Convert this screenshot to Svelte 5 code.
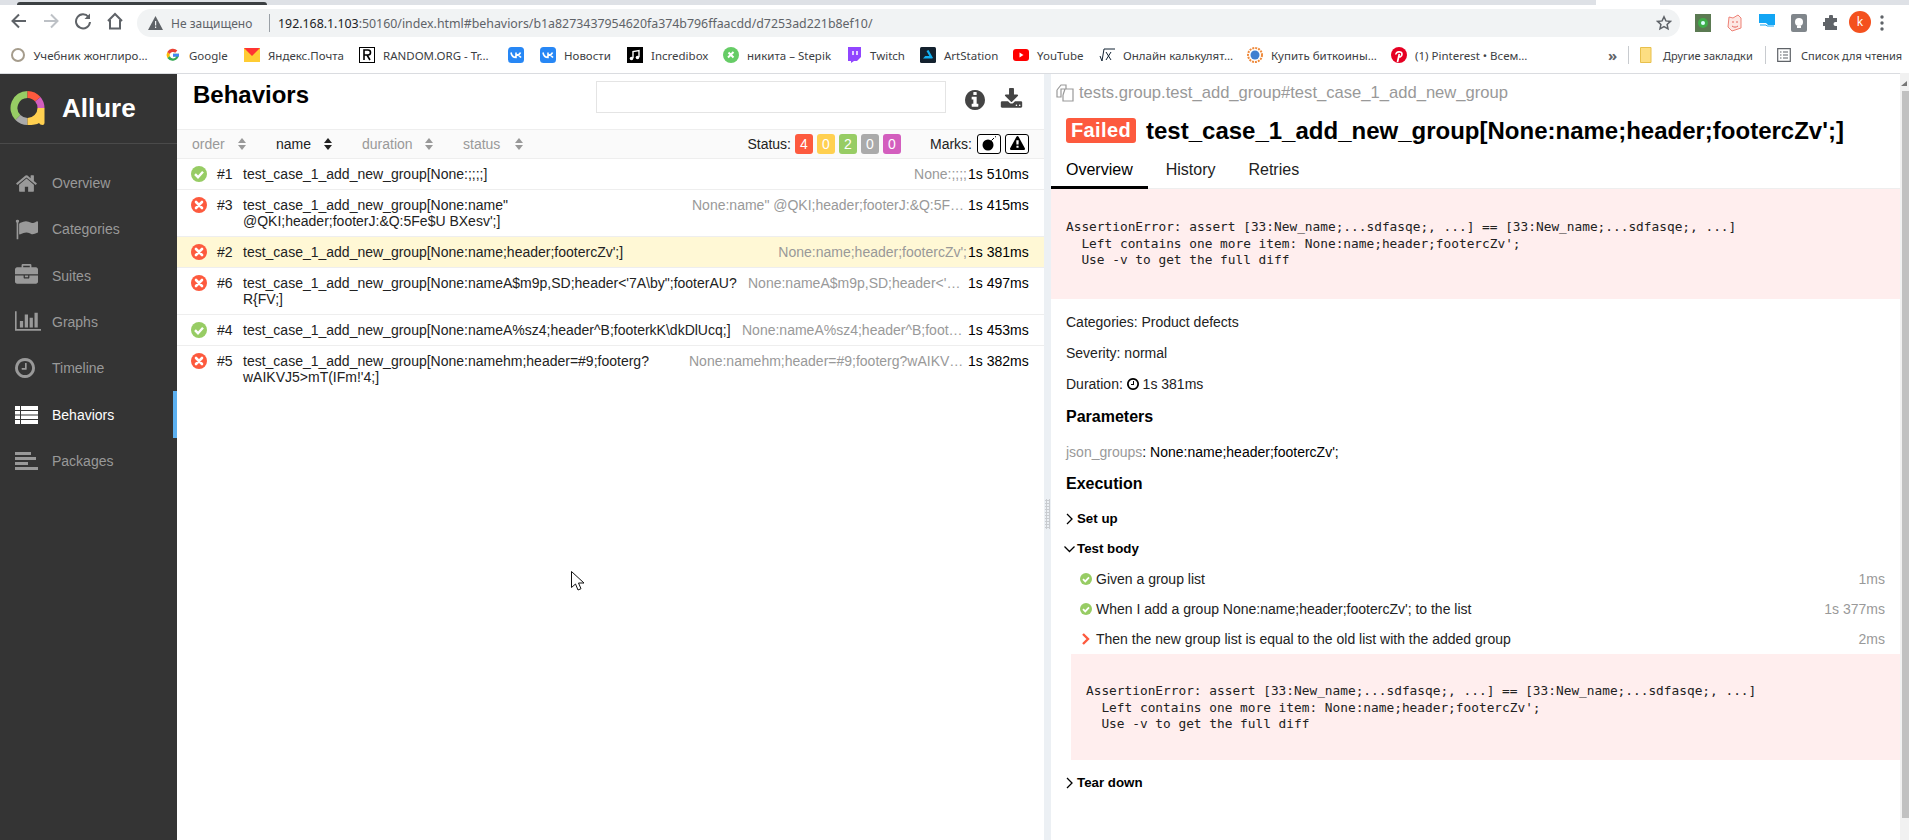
<script>
	const bookmarks = [
		{ kind: 'globe', label: 'Учебник жонглиро…', width: 155.5 },
		{ kind: 'google', label: 'Google', width: 79 },
		{ kind: 'yandex', label: 'Яндекс.Почта', width: 115 },
		{ kind: 'random', label: 'RANDOM.ORG - Tr…', width: 149 },
		{ kind: 'vk', label: '', width: 32 },
		{ kind: 'vk', label: 'Новости', width: 87 },
		{ kind: 'incredibox', label: 'Incredibox', width: 96 },
		{ kind: 'stepik', label: 'никита – Stepik', width: 123 },
		{ kind: 'twitch', label: 'Twitch', width: 74 },
		{ kind: 'artstation', label: 'ArtStation', width: 93 },
		{ kind: 'youtube', label: 'YouTube', width: 86 },
		{ kind: 'calc', label: 'Онлайн калькулят…', width: 148 },
		{ kind: 'bitcoin', label: 'Купить биткоины…', width: 144 },
		{ kind: 'pinterest', label: '(1) Pinterest • Всем…', width: 140 }
	];

	const navItems = [
		{ id: 'overview', name: 'Overview' },
		{ id: 'categories', name: 'Categories' },
		{ id: 'suites', name: 'Suites' },
		{ id: 'graphs', name: 'Graphs' },
		{ id: 'timeline', name: 'Timeline' },
		{ id: 'behaviors', name: 'Behaviors' },
		{ id: 'packages', name: 'Packages' }
	];

	const columns = [
		{ name: 'order', width: 84 },
		{ name: 'name', width: 86 },
		{ name: 'duration', width: 101 },
		{ name: 'status', width: 90 }
	];

	const statuses = [
		{ n: 4, color: '#fd5a3e' },
		{ n: 0, color: '#ffd050' },
		{ n: 2, color: '#97cc64' },
		{ n: 0, color: '#aaa' },
		{ n: 0, color: '#d35ebe' }
	];

	const rows = [
		{ ok: true, order: 1, params: 'None:;;;;', shown: 'None:;;;;', time: '1s 510ms' },
		{ ok: false, order: 3, params: 'None:name" @QKI;header;footerJ:&Q:5Fe$U BXesv\';', shown: 'None:name" @QKI;header;footerJ:&Q:5F…', time: '1s 415ms', w: 275 },
		{ ok: false, order: 2, params: "None:name;header;footercZv';", shown: "None:name;header;footercZv';", time: '1s 381ms', active: true },
		{ ok: false, order: 6, params: 'None:nameA$m9p,SD;header<\'7A\\by";footerAU?R{FV;', shown: "None:nameA$m9p,SD;header<'…", time: '1s 497ms', w: 219 },
		{ ok: true, order: 4, params: 'None:nameA%sz4;header^B;footerkK\\dkDlUcq;', shown: 'None:nameA%sz4;header^B;foot…', time: '1s 453ms', w: 225 },
		{ ok: false, order: 5, params: "None:namehm;header=#9;footerg?wAIKVJ5>mT(IFm!'4;", shown: 'None:namehm;header=#9;footerg?wAIKV…', time: '1s 382ms', w: 278 }
	];

	const errorText = `AssertionError: assert [33:New_name;...sdfasqe;, ...] == [33:New_name;...sdfasqe;, ...]
  Left contains one more item: None:name;header;footercZv';
  Use -v to get the full diff`;
</script>

{#snippet statusIcon(ok, size)}
	<svg class="status-icon" width={size} height={size} viewBox="0 0 16 16">
		{#if ok}
			<circle cx="8" cy="8" r="8" fill="#97cc64" />
			<path d="M4 8.2l3 3 5-5.4" fill="none" stroke="#fff" stroke-width="2.4" />
		{:else}
			<circle cx="8" cy="8" r="8" fill="#fd5a3e" />
			<path d="M5 5l6 6M11 5l-6 6" fill="none" stroke="#fff" stroke-width="2.6" stroke-linecap="round" />
		{/if}
	</svg>
{/snippet}

{#snippet navIcon(id)}
	{#if id === 'overview'}
		<svg width="23" height="23" viewBox="0 0 1792 1792"><path fill="currentColor" d="M1472 992v480q0 26-19 45t-45 19h-384v-384h-256v384h-384q-26 0-45-19t-19-45v-480q0-1 .5-3t.5-3l575-474 575 474q1 2 1 6zm223-69l-62 74q-8 9-21 11h-3q-13 0-21-7l-692-577-692 577q-12 8-24 7-13-2-21-11l-62-74q-8-10-7-23.5t11-21.5l719-599q32-26 76-26t76 26l244 204v-195q0-14 9-23t23-9h192q14 0 23 9t9 23v408l219 182q10 8 11 21.5t-7 23.5z" /></svg>
	{:else if id === 'categories'}
		<svg width="23" height="23" viewBox="0 0 1792 1792"><path fill="currentColor" d="M320 256q0 72-64 110v1266q0 13-9.5 22.5t-22.5 9.5h-64q-13 0-22.5-9.5t-9.5-22.5v-1266q-64-38-64-110 0-53 37.5-90.5t90.5-37.5 90.5 37.5 37.5 90.5zm1472 64v763q0 25-12.5 38.5t-39.5 27.5q-215 116-369 116-61 0-123.5-22t-108.5-48-115.5-48-142.5-22q-192 0-464 146-17 9-33 9-26 0-45-19t-19-45v-742q0-32 31-55 21-14 79-43 236-120 421-120 107 0 200 29t219 88q38 19 88 19 54 0 117.5-21t110-47 88-47 54.5-21q26 0 45 19t19 45z" /></svg>
	{:else if id === 'suites'}
		<svg width="23" height="23" viewBox="0 0 1792 1792"><path fill="currentColor" d="M640 256h512v-128h-512v128zm1152 640v480q0 66-47 113t-113 47h-1472q-66 0-113-47t-47-113v-480h672v160q0 26 19 45t45 19h320q26 0 45-19t19-45v-160h672zm-768 0v128h-256v-128h256zm768-480v384h-1792v-384q0-66 47-113t113-47h352v-160q0-40 28-68t68-28h576q40 0 68 28t28 68v160h352q66 0 113 47t47 113z" /></svg>
	{:else if id === 'graphs'}
		<svg width="26" height="23" viewBox="0 128 2048 1792"><path fill="currentColor" d="M640 896v512h-256v-512h256zm384-512v1024h-256v-1024h256zm1024 1152v128h-2048v-1536h128v1408h1920zm-640-896v768h-256v-768h256zm384-384v1152h-256v-1152h256z" /></svg>
	{:else if id === 'timeline'}
		<svg width="20" height="20" viewBox="128 128 1536 1536"><path fill="currentColor" d="M1024 544v448q0 14-9 23t-23 9h-320q-14 0-23-9t-9-23v-64q0-14 9-23t23-9h224v-352q0-14 9-23t23-9h64q14 0 23 9t9 23zm416 352q0-148-73-273t-198-198-273-73-273 73-198 198-73 273 73 273 198 198 273 73 273-73 198-198 73-273zm224 0q0 209-103 385.500t-279.500 279.500-385.500 103-385.500-103-279.500-279.500-103-385.500 103-385.500 279.500-279.500 385.500-103 385.500 103 279.500 279.500 103 385.500z" /></svg>
	{:else if id === 'behaviors'}
		<svg width="23" height="20" viewBox="0 0 23 20"><path fill="currentColor" d="M0 1h23v4H0zM0 6h23v3.5H0zM0 10.500h23V14H0zM0 15h23v4H0z" /><path fill="#343434" d="M5 1h1v18H5z" /></svg>
	{:else}
		<svg width="23" height="20" viewBox="0 0 23 20"><path fill="currentColor" d="M0 1h16v3H0zM0 6h21v3H0zM0 11h13v3H0zM0 16h23v3H0z" /></svg>
	{/if}
{/snippet}

{#snippet bookmarkIcon(kind)}
	<svg class="bm-icon" width="16" height="16" viewBox="0 0 16 16">
		{#if kind === 'globe'}
			<circle cx="8" cy="8" r="6" fill="#fff" stroke="#a59c8c" stroke-width="2" />
		{:else if kind === 'google'}
			<path d="M14 6.800H8v2.800h3.300A3.500 3.500 0 0 1 4.800 9L2.300 11A6.500 6.500 0 0 0 14 8z" fill="#34a853" />
			<path d="M2.300 5A6.500 6.500 0 0 0 2.300 11L4.800 9a3.500 3.500 0 0 1 0-2z" fill="#fbbc05" />
			<path d="M2.300 5l2.500 2a3.500 3.500 0 0 1 5.400-1.300L12.400 3.600A6.500 6.500 0 0 0 2.300 5z" fill="#ea4335" />
			<path d="M14 6.800H8v2.800h6z" fill="#4285f4" />
		{:else if kind === 'yandex'}
			<rect y="1" width="16" height="14" fill="#ffcc33" />
			<path d="M0 1h16L8 9z" fill="#f33" />
		{:else if kind === 'random'}
			<rect x=".5" y=".5" width="15" height="15" fill="#fff" stroke="#000" />
			<path d="M5 13V3h4a2.500 2.500 0 0 1 0 5H5M8 8l3 5" fill="none" stroke="#000" stroke-width="1.600" />
		{:else if kind === 'vk'}
			<rect width="16" height="16" rx="3.500" fill="#2787f5" />
			<path d="M3 5.500c.5 3 2 5 5 5V5.500M12.500 5.500C12 7 10.500 8 8.500 8c2 0 3.500 1 4.500 2.500" fill="none" stroke="#fff" stroke-width="1.600" />
		{:else if kind === 'incredibox'}
			<rect width="16" height="16" fill="#000" />
			<path d="M6 11V4.500l6-1V10" fill="none" stroke="#fff" stroke-width="1.400" />
			<circle cx="4.500" cy="11.500" r="1.800" fill="#fff" />
			<circle cx="10.500" cy="10.500" r="1.800" fill="#fff" />
		{:else if kind === 'stepik'}
			<circle cx="8" cy="8" r="8" fill="#66cc66" />
			<path d="M5 10.500L10.500 5M5.500 5.500l5 5" fill="none" stroke="#fff" stroke-width="2" />
		{:else if kind === 'twitch'}
			<path d="M2 0h13v10l-4 4H8l-3 2v-2H2z" fill="#9146ff" />
			<path d="M7 4v4M11 4v4" stroke="#fff" stroke-width="1.500" />
		{:else if kind === 'artstation'}
			<rect width="16" height="16" rx="1.500" fill="#13212e" />
			<path d="M8.500 3l4.500 8h-2.500L6.500 4zM3 11.500l2.200-2.500h6.300l1 1.800v.7z" fill="#13aff0" />
		{:else if kind === 'youtube'}
			<rect y="2" width="16" height="12" rx="3" fill="#f00" />
			<path d="M6.500 5.500v5l4-2.500z" fill="#fff" />
		{:else if kind === 'calc'}
			<path d="M1 9l2 5 2-12h11M7 5l5 8M12 5l-5 8" fill="none" stroke="#123" stroke-width="1" />
		{:else if kind === 'bitcoin'}
			<circle cx="8" cy="8" r="7" fill="#fff" stroke="#ee8a3c" stroke-width="2" stroke-dasharray="2 1" />
			<circle cx="8" cy="8" r="4.500" fill="#3f7fd0" />
		{:else if kind === 'pinterest'}
			<circle cx="8" cy="8" r="8" fill="#e60023" />
			<path d="M6.500 15l1.800-8M5 7.500C4.500 4.500 11 3.500 11 7c0 3-3 3.500-3.500 2" fill="none" stroke="#fff" stroke-width="1.700" />
		{/if}
	</svg>
{/snippet}

<div class="page">
	<div class="tabstrip">
		<span class="tab-dark"></span>
		<span class="tab-white"></span>
	</div>

	<div class="toolbar">
		<div class="nav-buttons">
			<svg width="32" height="18" viewBox="0 0 32 18"><path d="M23 9H10M16 2.500L9.500 9l6.500 6.500" fill="none" stroke="#5f6368" stroke-width="2" /></svg>
			<svg width="32" height="18" viewBox="0 0 32 18"><path d="M9 9h13M16 2.500L22.500 9 16 15.500" fill="none" stroke="#bdc1c6" stroke-width="2" /></svg>
			<svg width="32" height="18" viewBox="0 0 32 18"><path d="M21.500 5A7 7 0 1 0 23 10" fill="none" stroke="#5f6368" stroke-width="2" /><path d="M23 1.500V7h-5.500z" fill="#5f6368" /></svg>
			<svg width="32" height="18" viewBox="0 0 32 18"><path d="M9 9L16 2l7 7M11 8v8.500h10V8" fill="none" stroke="#5f6368" stroke-width="2" /></svg>
		</div>
		<div class="omnibox">
			<svg class="warn" width="15" height="14" viewBox="0 0 15 14"><path d="M7.500 0L15 14H0z" fill="#5f6368" /><path d="M7 5h1.200v4.500H7zM7 10.500h1.200V12H7z" fill="#f1f3f4" /></svg>
			<span class="insecure">Не защищено</span>
			<span class="omni-sep"></span>
			<span class="url">192.168.1.103<span class="url-rest">:50160/index.html#behaviors/b1a8273437954620fa374b796ffaacdd/d7253ad221b8ef10/</span></span>
			<svg class="star" width="16" height="16" viewBox="0 0 16 16"><path d="M8 1.800l1.900 4.100 4.500.5-3.300 3 .9 4.400L8 11.600l-4 2.200.9-4.400-3.300-3 4.500-.5z" fill="none" stroke="#5f6368" stroke-width="1.500" /></svg>
		</div>
		<div class="extensions">
			<svg width="16" height="18" viewBox="0 0 16 18"><rect width="16" height="18" fill="#5b7a52" /><circle cx="8" cy="9" r="5" fill="#3fae49" /><circle cx="8" cy="9" r="2" fill="#dff" /></svg>
			<svg width="16" height="18" viewBox="0 0 16 18"><path d="M2 3l4 1 5-3 3 3v10l-9 3-4-4z" fill="#fde8e4" stroke="#ee8277" /><path d="M5 8h2M9 8h2M5 12c2 1.500 4 1.500 6 0" fill="none" stroke="#e3625a" /></svg>
			<svg width="16" height="18" viewBox="0 0 16 18"><rect width="16" height="18" fill="#12a5f4" /><path d="M0 9h7l2 2h7v7H0z" fill="#fff" /><path d="M1 11h6l1 1h7" fill="none" stroke="#12a5f4" /></svg>
			<svg width="16" height="18" viewBox="0 0 16 18"><rect width="16" height="18" rx="2" fill="#80868b" /><circle cx="8" cy="8" r="4" fill="#fff" /><rect x="6" y="12" width="4" height="2" fill="#fff" /></svg>
			<svg width="16" height="16" viewBox="0 0 16 16"><path d="M6 1.500a2 2 0 0 1 4 0V3h4v4h-1.500a2 2 0 0 0 0 4H14v4H2v-4h-1.500a2 2 0 0 1 0-4H2V3h4z" fill="#5f6368" /></svg>
		</div>
		<span class="avatar">k</span>
		<svg class="menu-dots" width="4" height="16" viewBox="0 0 4 16"><circle cx="2" cy="2" r="1.700" fill="#5f6368" /><circle cx="2" cy="8" r="1.700" fill="#5f6368" /><circle cx="2" cy="14" r="1.700" fill="#5f6368" /></svg>
	</div>

	<div class="bookmarks">
		{#each bookmarks as b}
			<div class="bookmark" style="width: {b.width}px">
				{@render bookmarkIcon(b.kind)}
				{#if b.label}<span>{b.label}</span>{/if}
			</div>
		{/each}
		<div class="bm-right">
			<span class="more">»</span>
			<span class="bm-sep"></span>
			<svg class="folder" width="12" height="16" viewBox="0 0 12 16"><path d="M.5.500h10.500v15H.5z" fill="#fdd663" fill-opacity=".8" stroke="#e8c04c" /></svg>
			<span class="other">Другие закладки</span>
			<span class="bm-sep"></span>
			<svg class="reading" width="14" height="14" viewBox="0 0 14 14"><path d="M.7.700h12.600v12.600H.7zM3 4h1.500M6 4h5M3 7h1.500M6 7h5M3 10h1.500M6 10h5" fill="none" stroke="#5f6368" stroke-width="1.200" /></svg>
			<span>Список для чтения</span>
		</div>
	</div>

	<div class="app">
		<aside class="sidebar">
			<div class="brand">
				<svg width="36" height="36" viewBox="0 0 36 36">
					<path d="M7.950 26.550A13.500 13.500 0 0 1 17.500 3.500" fill="none" stroke="#97cc64" stroke-width="7" />
					<path d="M17.500 3.500A13.500 13.500 0 0 1 27.800 8.300" fill="none" stroke="#fd5a3e" stroke-width="7" />
					<path d="M27.800 8.300A13.500 13.500 0 0 1 31 17" fill="none" stroke="#d35ebe" stroke-width="7" />
					<path d="M17.500 30.500A13.500 13.500 0 0 1 7.950 26.550" fill="none" stroke="#aaa" stroke-width="7" />
					<path d="M17.500 27A10 10 0 0 0 27.500 17H34.500V32Q34.500 34 32.500 34Q30 34 29 32Q26 34 17.500 34Z" fill="#ffd050" />
				</svg>
				<span class="brand-name">Allure</span>
			</div>
			<nav class="nav">
				{#each navItems as item}
					<div class="nav-item {item.id === 'behaviors' ? 'active' : ''}">
						<span class="nav-icon">{@render navIcon(item.id)}</span>
						<span>{item.name}</span>
					</div>
				{/each}
			</nav>
		</aside>

		<section class="center">
			<div class="center-head">
				<h2>Behaviors</h2>
				<div class="search"></div>
				<svg class="info" width="20" height="20" viewBox="128 128 1536 1536"><path fill="#444" d="M1152 1376v-160q0-14-9-23t-23-9h-96v-512q0-14-9-23t-23-9h-320q-14 0-23 9t-9 23v160q0 14 9 23t23 9h96v320h-96q-14 0-23 9t-9 23v160q0 14 9 23t23 9h448q14 0 23-9t9-23zm-128-896v-160q0-14-9-23t-23-9h-192q-14 0-23 9t-9 23v160q0 14 9 23t23 9h192q14 0 23-9t9-23zm640 416q0 209-103 385.500t-279.500 279.500-385.500 103-385.500-103-279.500-279.500-103-385.500 103-385.500 279.500-279.500 385.500-103 385.500 103 279.500 279.500 103 385.500z" /></svg>
				<svg class="download" width="23" height="23" viewBox="0 0 1792 1792"><path fill="#444" d="M1344 1344q0-26-19-45t-45-19-45 19-19 45 19 45 45 19 45-19 19-45zm256 0q0-26-19-45t-45-19-45 19-19 45 19 45 45 19 45-19 19-45zm128-224v320q0 40-28 68t-68 28h-1472q-40 0-68-28t-28-68v-320q0-40 28-68t68-28h465l135 136q58 56 136 56t136-56l136-136h464q40 0 68 28t28 68zm-325-569q17 41-14 70l-448 448q-18 19-45 19t-45-19l-448-448q-31-29-14-70 17-39 59-39h256v-448q0-26 19-45t45-19h256q26 0 45 19t19 45v448h256q42 0 59 39z" /></svg>
			</div>

			<div class="table-head">
				{#each columns as col}
					<div class="col {col.name === 'name' ? 'sorted' : ''}" style="width: {col.width}px">
						<span class="col-name">{col.name}</span>
						<svg width="8" height="12" viewBox="0 0 8 12"><path d="M4 0l4 5H0z" fill={col.name === 'name' ? '#222' : '#999'} /><path d="M4 12L0 7h8z" fill={col.name === 'name' ? '#222' : '#999'} /></svg>
					</div>
				{/each}
				<div class="filters">
					<span>Status:</span>
					<div class="badges">
						{#each statuses as s}
							<span class="badge" style="background: {s.color}">{s.n}</span>
						{/each}
					</div>
					<span class="marks-label">Marks:</span>
					<span class="mark">
						<svg width="16" height="15" viewBox="0 0 16 15"><circle cx="7" cy="9" r="5.500" fill="#000" /><path d="M10.500 4.500L13 2M14 1l1-.5" fill="none" stroke="#000" stroke-width="1" /></svg>
					</span>
					<span class="mark">
						<svg width="15" height="15" viewBox="0 0 1792 1792"><path fill="#000" d="M1024 1375v-190q0-14-9.500-23.500t-22.500-9.500h-192q-13 0-22.500 9.500t-9.500 23.500v190q0 14 9.500 23.500t22.500 9.500h192q13 0 22.500-9.500t9.500-23.500zm-2-374l18-459q0-12-10-19-13-11-24-11h-220q-11 0-24 11-10 7-10 21l17 457q0 10 10 16.500t24 6.500h185q14 0 23.500-6.500t10.500-16.500zm-14-934l768 1408q35 63-2 126-17 29-46.500 46t-63.500 17h-1536q-34 0-63.500-17t-46.500-46q-37-63-2-126l768-1408q17-31 47-49t65-18 65 18 47 49z" /></svg>
					</span>
				</div>
			</div>

			{#each rows as row}
				<div class="row {row.active ? 'active' : ''}">
					{@render statusIcon(row.ok, 16)}
					<span class="order">#{row.order}</span>
					<span class="name">test_case_1_add_new_group[{row.params}]</span>
					<span class="params" style={row.w ? `width: ${row.w}px` : ''}>{row.shown}</span>
					<span class="time">{row.time}</span>
				</div>
			{/each}
		</section>

		<div class="splitter"><span class="grip"></span></div>

		<section class="detail">
			<div class="detail-body">
				<div class="path">
					<svg width="18" height="18" viewBox="0 0 18 18"><path d="M1 6l4-5h5v4M9 5H5v4M5 9v4H1V6M9 5h8v12H7V11M7 11l2-6" fill="none" stroke="#999" stroke-width="1.200" /></svg>
					<span>tests.group.test_add_group#test_case_1_add_new_group</span>
				</div>
				<div class="title-row">
					<span class="failed">Failed</span>
					<h1>test_case_1_add_new_group[None:name;header;footercZv';]</h1>
				</div>
				<div class="tabs">
					<span class="tab selected">Overview</span>
					<span class="tab">History</span>
					<span class="tab">Retries</span>
				</div>
				<pre class="error">{errorText}</pre>

				<div class="meta first">Categories: Product defects</div>
				<div class="meta">Severity: normal</div>
				<div class="meta">
					Duration:
					<svg class="clock" width="12" height="12" viewBox="128 128 1536 1536"><path fill="#000" d="M1024 544v448q0 14-9 23t-23 9h-320q-14 0-23-9t-9-23v-64q0-14 9-23t23-9h224v-352q0-14 9-23t23-9h64q14 0 23 9t9 23zm416 352q0-148-73-273t-198-198-273-73-273 73-198 198-73 273 73 273 198 198 273 73 273-73 198-198 73-273zm224 0q0 209-103 385.500t-279.500 279.500-385.500 103-385.500-103-279.500-279.500-103-385.500 103-385.500 279.500-279.500 385.500-103 385.500 103 279.500 279.500 103 385.500z" /></svg>
					1s 381ms
				</div>

				<h3 class="params-title">Parameters</h3>
				<div class="param-line"><span class="param-key">json_groups</span>: None:name;header;footercZv';</div>
				<h3 class="exec-title">Execution</h3>

				<div class="stage setup">
					<svg width="8" height="12" viewBox="0 0 8 12"><path d="M1.500 1l5 5-5 5" fill="none" stroke="#000" stroke-width="1.300" /></svg>
					<b>Set up</b>
				</div>
				<div class="stage">
					<svg width="12" height="8" viewBox="0 0 12 8"><path d="M1 1.500l5 5 5-5" fill="none" stroke="#000" stroke-width="1.300" /></svg>
					<b>Test body</b>
				</div>

				<div class="step first-step">
					{@render statusIcon(true, 12)}
					<span class="step-name">Given a group list</span>
					<span class="step-time">1ms</span>
				</div>
				<div class="step">
					{@render statusIcon(true, 12)}
					<span class="step-name">When I add a group None:name;header;footercZv'; to the list</span>
					<span class="step-time">1s 377ms</span>
				</div>
				<div class="step">
					<svg class="status-icon" width="12" height="12" viewBox="0 0 12 12"><path d="M3 1l5 5-5 5" fill="none" stroke="#fd5a3e" stroke-width="2.400" /></svg>
					<span class="step-name">Then the new group list is equal to the old list with the added group</span>
					<span class="step-time">2ms</span>
				</div>
				<pre class="error nested">{errorText}</pre>

				<div class="stage teardown">
					<svg width="8" height="12" viewBox="0 0 8 12"><path d="M1.500 1l5 5-5 5" fill="none" stroke="#000" stroke-width="1.300" /></svg>
					<b>Tear down</b>
				</div>
			</div>
			<div class="scrollbar">
				<svg class="arrow-up" width="9" height="18" viewBox="0 0 9 18"><path d="M1 13l6-5v5z" fill="#777" /></svg>
				<span class="thumb"></span>
			</div>
		</section>

		<svg class="cursor" width="16" height="22" viewBox="0 0 16 22"><path d="M.5.500v16l4-3.500 2.500 6 3-1.300-2.500-5.700h5.500z" fill="#fff" stroke="#111" stroke-width="1" /></svg>
	</div>
</div>

<style>
	:global(body) {
		margin: 0;
		background: #fff;
	}

	.page {
		width: 1909px;
		height: 840px;
		overflow: hidden;
		font-family: 'Liberation Sans', Arial, sans-serif;
		font-size: 14px;
		color: #000;
	}

	.tabstrip {
		position: relative;
		height: 5px;
		background: #dee1e6;
	}

	.tab-dark {
		position: absolute;
		left: 17px;
		top: 2px;
		width: 250px;
		height: 3px;
		background: #3c4043;
		border-radius: 3px 3px 0 0;
	}

	.tab-white {
		position: absolute;
		left: 1596px;
		top: 0;
		width: 64px;
		height: 5px;
		background: #fff;
	}

	.toolbar {
		height: 32px;
		display: flex;
		align-items: flex-start;
		background: #fff;
		font-family: 'Noto Sans', sans-serif;
	}

	.nav-buttons {
		display: flex;
		width: 137px;
		padding: 7px 0 0 3px;
		box-sizing: border-box;
	}

	.omnibox {
		width: 1543px;
		height: 28px;
		margin-top: 4px;
		background: #f1f3f4;
		border-radius: 14px;
		display: flex;
		align-items: center;
		color: #5f6368;
	}

	.warn {
		margin-left: 11px;
	}

	.insecure {
		margin-left: 8px;
		width: 90px;
		white-space: nowrap;
		font-size: 12px;
	}

	.omni-sep {
		width: 1px;
		height: 18px;
		background: #9aa0a6;
		margin: 0 8px 0 8px;
	}

	.url {
		color: #202124;
		white-space: nowrap;
		flex: 1;
		font-size: 12.370px;
	}

	.url-rest {
		color: #5f6368;
	}

	.star {
		margin-right: 8px;
	}

	.extensions {
		display: flex;
		align-items: center;
		height: 28px;
		margin-top: 4px;
		width: 170px;
		gap: 16px;
		padding-left: 15px;
		box-sizing: border-box;
	}

	.avatar {
		width: 22px;
		height: 22px;
		margin: 6px 0 0 -1px;
		flex: none;
		border-radius: 50%;
		background: #f4511e;
		color: #fff;
		font-size: 12px;
		line-height: 22px;
		text-align: center;
	}

	.menu-dots {
		margin: 10px 0 0 9px;
	}

	.bookmarks {
		height: 36px;
		border-bottom: 1px solid #dadce0;
		display: flex;
		align-items: center;
		padding-left: 9.500px;
		font-family: 'Noto Sans', sans-serif;
		font-size: 11.500px;
		color: #3c4043;
	}

	.bookmark {
		display: flex;
		align-items: center;
		flex: none;
		white-space: nowrap;
	}

	.bm-icon {
		flex: none;
		margin-right: 8px;
	}

	.bm-right {
		display: flex;
		align-items: center;
		margin-left: 77px;
		white-space: nowrap;
		font-size: 11px;
	}

	.more {
		font-size: 15px;
		color: #5f6368;
		font-weight: bold;
		width: 14px;
	}

	.bm-sep {
		width: 1px;
		height: 18px;
		background: #c8cbcf;
		margin-left: 6px;
	}

	.folder {
		margin: 0 11px;
	}

	.reading {
		margin: 0 10px 0 11px;
	}

	.other {
		width: 91px;
		margin-right: 5px;
	}

	.app {
		position: relative;
		display: flex;
		height: 766px;
	}

	.sidebar {
		width: 177px;
		flex: none;
		background: #343434;
	}

	.brand {
		height: 70px;
		box-sizing: border-box;
		border-bottom: 1px solid #4a4a4a;
		display: flex;
		align-items: center;
		padding-left: 10px;
	}

	.brand-name {
		margin-left: 16px;
		color: #fff;
		font-size: 26px;
		font-weight: bold;
	}

	.nav {
		padding-top: 16px;
	}

	.nav-item {
		height: 46.300px;
		display: flex;
		align-items: center;
		color: #999;
		box-sizing: border-box;
	}

	.nav-item.active {
		color: #fff;
		border-right: 4px solid #5cb0f0;
	}

	.nav-icon {
		width: 52px;
		padding-left: 15px;
		box-sizing: border-box;
		display: flex;
		align-items: center;
	}

	.center {
		width: 867px;
		flex: none;
	}

	.center-head {
		height: 55px;
		display: flex;
		align-items: flex-start;
		padding-left: 16px;
	}

	.center-head h2 {
		margin: 7px 0 0;
		width: 403px;
		font-size: 24px;
		line-height: 27px;
		font-weight: bold;
	}

	.search {
		width: 350px;
		height: 32px;
		margin-top: 7px;
		box-sizing: border-box;
		border: 1px solid #e4e4e4;
	}

	.info {
		margin: 16px 0 0 19px;
	}

	.download {
		margin: 14px 0 0 15px;
	}

	.table-head {
		height: 30px;
		box-sizing: border-box;
		display: flex;
		align-items: center;
		background: #fafafa;
		border-top: 1px solid #eee;
		border-bottom: 1px solid #eee;
		padding: 0 0 1px 15px;
		color: #999;
	}

	.col {
		display: flex;
		align-items: center;
		flex: none;
	}

	.col.sorted {
		color: #222;
	}

	.col-name {
		margin-right: auto;
	}

	.col svg {
		margin-right: 30px;
	}

	.filters {
		margin-left: auto;
		display: flex;
		align-items: center;
		color: #222;
		padding-right: 15px;
	}

	.badges {
		display: flex;
		gap: 4px;
		margin-left: 4px;
	}

	.badge {
		width: 18px;
		height: 20px;
		border-radius: 3px;
		text-align: center;
		line-height: 20px;
		color: #fff;
	}

	.marks-label {
		margin: 0 5px 0 29px;
	}

	.mark {
		width: 24px;
		height: 20px;
		box-sizing: border-box;
		border: 1px solid #000;
		border-radius: 3px;
		margin-right: 4px;
		display: flex;
		align-items: center;
		justify-content: center;
		background: #fff;
	}

	.mark:last-child {
		margin-right: 0;
	}

	.row {
		display: flex;
		align-items: flex-start;
		padding: 7px 16px 7px 14px;
		line-height: 16px;
		border-bottom: 1px solid #eee;
		color: #222;
	}

	.row:last-child {
		border-bottom: none;
	}

	.row.active {
		background: #fff8d5;
	}

	.status-icon {
		flex: none;
		display: block;
	}

	.order {
		width: 26px;
		margin-left: 10px;
		flex: none;
	}

	.name {
		flex: 1;
		min-width: 0;
	}

	.params {
		color: #999;
		margin-left: 12px;
		white-space: nowrap;
		flex: none;
	}

	.time {
		width: 60px;
		flex: none;
		margin-left: 1px;
		text-align: right;
		white-space: nowrap;
		color: #000;
	}

	.splitter {
		width: 7px;
		flex: none;
		background: #ecf0f4;
		position: relative;
	}

	.grip {
		position: absolute;
		left: 1px;
		top: 425px;
		width: 5px;
		height: 30px;
		background-image: radial-gradient(circle, #c9ccd0 1px, transparent 1.200px);
		background-size: 3px 3px;
	}

	.detail {
		flex: 1;
		display: flex;
		min-width: 0;
	}

	.detail-body {
		flex: 1;
		min-width: 0;
	}

	.scrollbar {
		width: 9px;
		flex: none;
		background: #f1f1f1;
		margin-top: -1px;
		position: relative;
	}

	.arrow-up {
		display: block;
	}

	.thumb {
		position: absolute;
		top: 18px;
		left: 2px;
		right: 0;
		height: 727px;
		background: #c1c1c1;
	}

	.path {
		display: flex;
		align-items: center;
		height: 22px;
		margin-top: 8px;
		padding-left: 5px;
		font-size: 16.600px;
		color: #999;
	}

	.path svg {
		margin-right: 5px;
	}

	.title-row {
		display: flex;
		align-items: center;
		height: 25px;
		margin-top: 14px;
		padding-left: 15px;
	}

	.failed {
		width: 70px;
		height: 25px;
		flex: none;
		border-radius: 3px;
		background: #fd5a3e;
		color: #fff;
		font-size: 20px;
		font-weight: bold;
		line-height: 25px;
		text-align: center;
		letter-spacing: 0.4px;
	}

	h1 {
		margin: 0 0 0 10px;
		font-size: 24px;
		font-weight: bold;
		white-space: nowrap;
		line-height: 25px;
	}

	.tabs {
		display: flex;
		gap: 3px;
		height: 46px;
		box-shadow: inset 0 -1px #eee;
	}

	.tab {
		padding: 17px 15px 6px;
		font-size: 16px;
		line-height: 20px;
		color: #222;
		height: 46px;
		box-sizing: border-box;
	}

	.tab.selected {
		border-bottom: 3px solid #000;
		color: #000;
	}

	.error {
		margin: 0;
		height: 110px;
		box-sizing: border-box;
		padding: 30px 15px;
		background: #fee;
		font-family: 'DejaVu Sans Mono', monospace;
		font-size: 12.800px;
		line-height: 16.640px;
		color: #222;
		overflow: hidden;
	}

	.meta {
		margin: 15px 0 0 15px;
		line-height: 16px;
		color: #222;
	}

	.clock {
		vertical-align: -1px;
	}

	.params-title {
		margin: 15px 0 0 15px;
		font-size: 16px;
		line-height: 20px;
	}

	.param-line {
		margin: 17px 0 0 15px;
		line-height: 16px;
	}

	.param-key {
		color: #999;
	}

	.exec-title {
		margin: 14px 0 0 15px;
		font-size: 16px;
		line-height: 20px;
	}

	.stage {
		display: flex;
		align-items: center;
		margin: 14px 0 0 11px;
		line-height: 16px;
		font-size: 13.300px;
	}

	.stage.setup {
		margin-top: 17px;
	}

	.stage.teardown {
		margin-top: 15px;
	}

	.stage svg {
		width: 15px;
		flex: none;
	}

	.step {
		display: flex;
		align-items: center;
		margin: 14px 15px 0 29px;
		line-height: 16px;
		color: #222;
	}

	.step-name {
		margin-left: 4px;
		flex: 1;
	}

	.step-time {
		color: #999;
	}

	.error.nested {
		height: 106px;
		margin: 7px 0 0 20px;
		padding-top: 29px;
	}

	.cursor {
		position: absolute;
		left: 571px;
		top: 497px;
	}
</style>
